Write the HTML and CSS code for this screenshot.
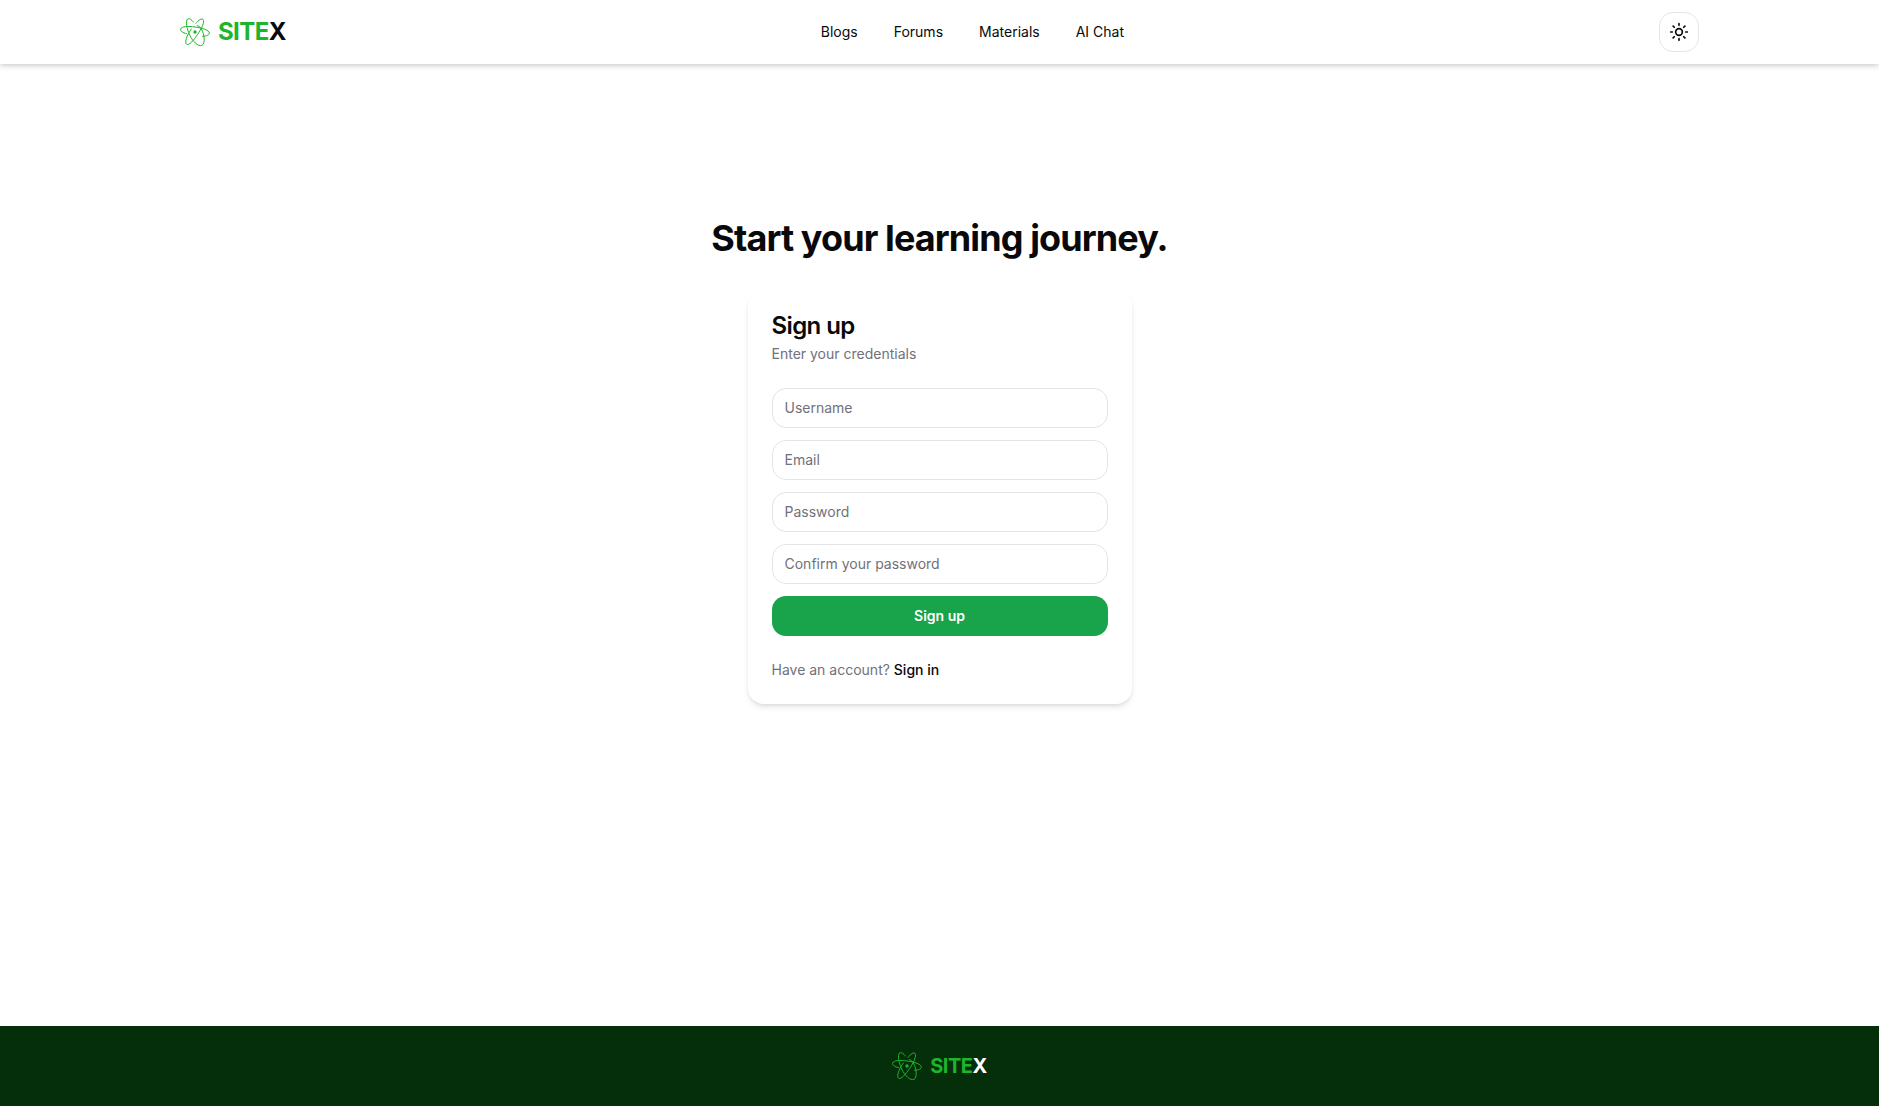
FILE: index.html
```html
<!DOCTYPE html>
<html lang="en">
<head>
<meta charset="utf-8">
<meta name="viewport" content="width=device-width, initial-scale=1">
<title>SITEX - Sign up</title>
<link rel="stylesheet" href="styles.css">
</head>
<body>
<svg class="sprite" aria-hidden="true">
  <symbol id="atom" viewBox="0 0 90 90">
    <g fill="none" stroke="currentColor" stroke-width="3" stroke-linecap="round">
      <path d="M20 50C7 47 0 42 2 36C5 28 24 27 45 30C69 33 88 40 88 48C88 54 80 57 68 58"/>
      <path d="M48 19C56 9 65 3 69 7C75 14 64 36 53 52C41 70 27 86 20 82C13 77 20 55 34 36"/>
      <path d="M40 15C34 7 28 3 23 6C16 12 20 34 29 54C38 73 55 90 66 85C76 79 74 53 64 36C61 30 57 27 52 26"/>
    </g>
    <circle cx="45" cy="45" r="5" fill="currentColor"/>
  </symbol>
</svg>
<header class="header">
  <div class="header-inner">
    <a class="brand" href="#"><svg class="brand-icon" aria-hidden="true"><use href="#atom"/></svg><span class="brand-name">SITE<span class="brand-x">X</span></span></a>
    <nav class="nav" aria-label="Main">
      <a href="#">Blogs</a>
      <a href="#">Forums</a>
      <a href="#">Materials</a>
      <a href="#">AI Chat</a>
    </nav>
    <button class="theme-toggle" type="button" aria-label="Toggle theme">
      <svg width="20" height="20" viewBox="0 0 24 24" fill="none" stroke="currentColor" stroke-width="2" stroke-linecap="round" stroke-linejoin="round" aria-hidden="true">
        <circle cx="12" cy="12" r="4"/>
        <path d="M12 2v2M12 20v2M4.93 4.93l1.41 1.41M17.66 17.66l1.41 1.41M2 12h2M20 12h2M6.34 17.66l-1.41 1.41M19.07 4.93l-1.41 1.41"/>
      </svg>
    </button>
  </div>
</header>
<main class="main">
  <h1 class="headline">Start your learning journey.</h1>
  <section class="card">
    <div class="card-header">
      <h2 class="card-title">Sign up</h2>
      <p class="muted">Enter your credentials</p>
    </div>
    <form class="form">
      <input class="field" type="text" placeholder="Username" aria-label="Username">
      <input class="field" type="email" placeholder="Email" aria-label="Email">
      <input class="field" type="password" placeholder="Password" aria-label="Password">
      <input class="field" type="password" placeholder="Confirm your password" aria-label="Confirm your password">
      <button class="submit" type="submit">Sign up</button>
    </form>
    <p class="muted">Have an account? <a class="signin" href="#">Sign in</a></p>
  </section>
</main>
<footer class="footer">
  <a class="brand" href="#"><svg class="brand-icon" aria-hidden="true"><use href="#atom"/></svg><span class="brand-name">SITE<span class="brand-x">X</span></span></a>
</footer>
</body>
</html>
```
FILE: styles.css
```css
* { box-sizing: border-box; }
body {
  margin: 0;
  min-height: 100vh;
  display: flex;
  flex-direction: column;
  background: #fff;
  color: #09090b;
  font: 14px/20px Inter, "Liberation Sans", sans-serif;
}
h1, h2, p { margin: 0; }
a { color: inherit; text-decoration: none; }
.sprite { position: absolute; width: 0; height: 0; }

.header { background: #fff; box-shadow: 0 1px 6px rgba(0, 0, 0, .25); }
.header-inner {
  max-width: 1519px;
  height: 64px;
  margin: 0 auto;
  display: flex;
  align-items: center;
  justify-content: space-between;
}
.brand { display: flex; align-items: center; gap: 8px; color: #1cb52b; }
.brand-icon { width: 30px; height: 30px; }
.brand-name { font-size: 24px; line-height: 32px; font-weight: 700; letter-spacing: -0.025em; }
.brand-x { color: #09090b; }
.nav { display: flex; gap: 36px; }
.theme-toggle {
  width: 40px;
  height: 40px;
  padding: 0;
  display: grid;
  place-items: center;
  border: 1px solid #e4e4e7;
  border-radius: 14px;
  background: #fff;
  color: #09090b;
}

.main {
  flex: 1;
  display: flex;
  flex-direction: column;
  align-items: center;
  gap: 32px;
  padding: 154px 16px 64px;
}
.headline { font-size: 36px; line-height: 40px; font-weight: 700; letter-spacing: -0.025em; text-align: center; }
.card {
  width: 100%;
  max-width: 384px;
  display: flex;
  flex-direction: column;
  gap: 24px;
  padding: 24px;
  border-radius: 16px;
  box-shadow: 0 4px 6px -1px rgba(0, 0, 0, .1), 0 2px 4px -2px rgba(0, 0, 0, .1);
}
.card-header { display: flex; flex-direction: column; gap: 6px; }
.card-title { font-size: 24px; line-height: 24px; font-weight: 600; letter-spacing: -0.025em; }
.muted { color: #71717a; }
.form { display: flex; flex-direction: column; gap: 12px; }
.field {
  width: 100%;
  height: 40px;
  padding: 8px 12px 10px;
  border: 1px solid #e4e4e7;
  border-radius: 14px;
  background: #fff;
  color: #09090b;
  font: inherit;
}
.field::placeholder { color: #71717a; opacity: 1; }
.submit {
  height: 40px;
  border: 0;
  border-radius: 14px;
  background: #19a34a;
  color: #fff;
  font: inherit;
  font-weight: 600;
}
.signin { color: #09090b; font-weight: 500; }

.footer {
  height: 80px;
  display: flex;
  align-items: center;
  justify-content: center;
  background: #052e0b;
}
.footer .brand-name { font-size: 20px; line-height: 28px; }
.footer .brand-x { color: #fff; }
```
